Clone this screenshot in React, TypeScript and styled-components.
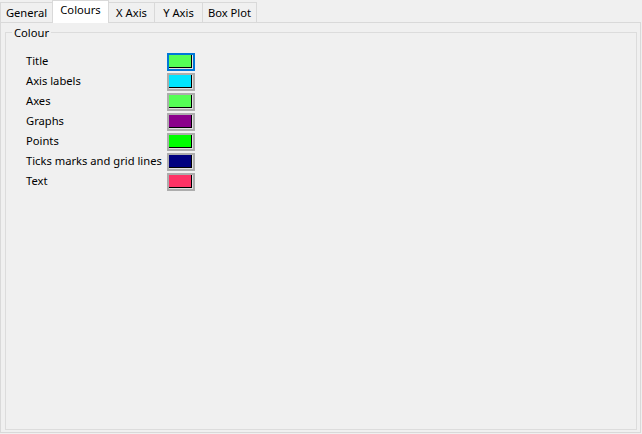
import React from "react";
import styled, { createGlobalStyle } from "styled-components";

const Global = createGlobalStyle`
  html, body { margin: 0; padding: 0; background: #f0f0f0; }
  body { font-family: "Noto Sans", "Open Sans", sans-serif; font-size: 11.2px; color: #000; }
`;

const Window = styled.div`
  width: 642px;
  height: 434px;
  display: flex;
  flex-direction: column;
  background: #f0f0f0;
`;

const TabStrip = styled.div`
  display: flex;
  align-items: flex-end;
  height: 22px;
`;

const Tab = styled.div<{ $w: number; $active?: boolean }>`
  box-sizing: border-box;
  width: ${(p) => p.$w}px;
  height: ${(p) => (p.$active ? 23 : 20)}px;
  margin-bottom: ${(p) => (p.$active ? -1 : 0)}px;
  position: relative;
  z-index: ${(p) => (p.$active ? 2 : 1)};
  border: 1px solid #d9d9d9;
  border-bottom: none;
  background: ${(p) => (p.$active ? "#ffffff" : "#f0f0f0")};
  display: flex;
  align-items: center;
  justify-content: center;
  padding-bottom: ${(p) => (p.$active ? 4 : 0)}px;
  line-height: 16px;
  white-space: nowrap;
  & + & { margin-left: -1px; }
`;

const Panel = styled.div`
  box-sizing: border-box;
  width: 641px;
  height: 411px;
  border: 1px solid #d9d9d9;
  padding: 9px 3px 2px 4px;
  display: flex;
  flex-direction: column;
`;

const GroupBox = styled.div`
  position: relative;
  flex: 1;
  border: 1px solid #dcdcdc;
  padding: 19px 0 0 20px;
`;

const Legend = styled.span`
  position: absolute;
  left: 6px;
  top: -8px;
  padding: 0 2px;
  background: #f0f0f0;
  line-height: 16px;
`;

const ColourGrid = styled.div`
  display: grid;
  grid-template-columns: 141px 28px;
  grid-auto-rows: 20px;
  align-items: center;
`;

const Label = styled.span`
  line-height: 16px;
  white-space: nowrap;
  margin-top: -3px;
`;

const Swatch = styled.div<{ $focused?: boolean }>`
  box-sizing: border-box;
  width: 28px;
  height: 18px;
  border: 2px solid ${(p) => (p.$focused ? "#0078d7" : "#adadad")};
  background: #e1e1e1;
  display: flex;
  padding: 0 1px 1px 0;
`;

const Fill = styled.div<{ $c: string }>`
  flex: 1;
  background: ${(p) => p.$c};
  border-right: 1px solid #000;
  border-bottom: 1px solid #000;
`;

const tabs = [
  { name: "General", w: 53 },
  { name: "Colours", w: 57, active: true },
  { name: "X Axis", w: 47 },
  { name: "Y Axis", w: 49 },
  { name: "Box Plot", w: 55 },
];

const colours = [
  { label: "Title", c: "#55ff55", focused: true },
  { label: "Axis labels", c: "#00e5ff" },
  { label: "Axes", c: "#55ff55" },
  { label: "Graphs", c: "#8b008b" },
  { label: "Points", c: "#00ff00" },
  { label: "Ticks marks and grid lines", c: "#000080" },
  { label: "Text", c: "#ff3366" },
];

export default function App() {
  return (
    <>
      <Global />
      <Window>
        <TabStrip>
          {tabs.map((t) => (
            <Tab key={t.name} $w={t.w} $active={t.active}>
              {t.name}
            </Tab>
          ))}
        </TabStrip>
        <Panel>
          <GroupBox>
            <Legend>Colour</Legend>
            <ColourGrid>
              {colours.map((r) => (
                <React.Fragment key={r.label}>
                  <Label>{r.label}</Label>
                  <Swatch $focused={r.focused}>
                    <Fill $c={r.c} />
                  </Swatch>
                </React.Fragment>
              ))}
            </ColourGrid>
          </GroupBox>
        </Panel>
      </Window>
    </>
  );
}
